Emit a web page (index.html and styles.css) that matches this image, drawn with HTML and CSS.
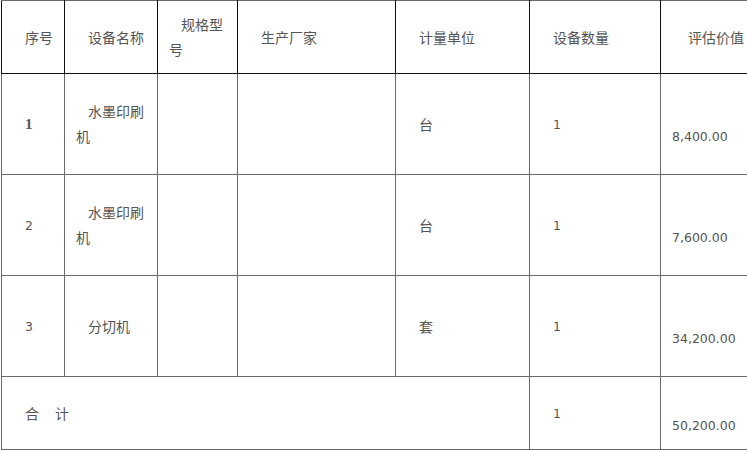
FILE: index.html
```html
<!DOCTYPE html>
<html lang="zh-CN">
<head>
<meta charset="utf-8">
<title>设备评估表</title>
<link rel="stylesheet" href="styles.css">
</head>
<body>
<table class="sheet">
  <colgroup>
    <col class="c1"><col class="c2"><col class="c3"><col class="c4"><col class="c5"><col class="c6"><col class="c7">
  </colgroup>
  <thead>
    <tr class="head">
      <th>序号</th>
      <th>设备名称</th>
      <th>规格型号</th>
      <th>生产厂家</th>
      <th>计量单位</th>
      <th>设备数量</th>
      <th class="val">评估价值</th>
    </tr>
  </thead>
  <tbody>
    <tr class="row">
      <td class="num serif">1</td>
      <td>水墨印刷机</td>
      <td></td>
      <td></td>
      <td>台</td>
      <td class="num">1</td>
      <td class="money">8,400.00</td>
    </tr>
    <tr class="row">
      <td class="num">2</td>
      <td>水墨印刷机</td>
      <td></td>
      <td></td>
      <td>台</td>
      <td class="num">1</td>
      <td class="money">7,600.00</td>
    </tr>
    <tr class="row">
      <td class="num">3</td>
      <td>分切机</td>
      <td></td>
      <td></td>
      <td>套</td>
      <td class="num">1</td>
      <td class="money">34,200.00</td>
    </tr>
    <tr class="total">
      <td colspan="5">合<span class="gap"></span>计</td>
      <td class="num">1</td>
      <td class="money">50,200.00</td>
    </tr>
  </tbody>
</table>
</body>
</html>
```
FILE: styles.css
```css
html, body {
  margin: 0;
  padding: 0;
  background: #fff;
  overflow: hidden;
}
body {
  width: 747px;
  height: 451px;
}
.sheet {
  margin-left: 1px;
  border-collapse: collapse;
  table-layout: fixed;
  width: 772px;
  font-family: "Noto Sans CJK SC", "Noto Sans", sans-serif;
  font-size: 14px;
  color: #555;
}
.c1 { width: 63px; }
.c2 { width: 93px; }
.c3 { width: 80px; }
.c4 { width: 158px; }
.c5 { width: 134px; }
.c6 { width: 131px; }
.c7 { width: 113px; }

th, td {
  padding: 0 10px 0 11px;
  text-align: left;
  vertical-align: middle;
  font-weight: normal;
  line-height: 25px;
  text-indent: 12px;
  word-break: break-all;
}
th {
  border: 1px solid #111;
  border-top-color: #6a6a6a;
}
td {
  border: 1px solid #6a6a6a;
}
th.val {
  text-indent: 16px;
}
.head { height: 73px; }
.row { height: 101px; }
.total { height: 73px; }

.num {
  font-family: "DejaVu Sans", sans-serif;
  font-size: 12.5px;
}
.serif {
  font-family: "Liberation Serif", serif;
  font-weight: bold;
  font-size: 15px;
}
.money {
  font-family: "DejaVu Sans", sans-serif;
  font-size: 12.5px;
  text-indent: 0;
  padding-top: 25px;
}
.gap {
  display: inline-block;
  width: 16px;
}
```
